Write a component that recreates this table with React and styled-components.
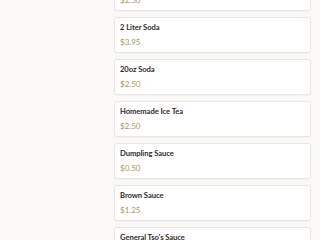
import React from "react";
import styled, { createGlobalStyle } from "styled-components";

const GlobalStyle = createGlobalStyle`
  body {
    margin: 0;
    background: #faf9f7;
    font-family: "Lato", "Noto Sans", sans-serif;
  }
`;

const items = [
  { name: "Hot Tea", price: "$2.50" },
  { name: "2 Liter Soda", price: "$3.95" },
  { name: "20oz Soda", price: "$2.50" },
  { name: "Homemade Ice Tea", price: "$2.50" },
  { name: "Dumpling Sauce", price: "$0.50" },
  { name: "Brown Sauce", price: "$1.25" },
  { name: "General Tso's Sauce", price: "$1.25" },
];

const Page = styled.div`
  height: 240px;
  overflow: hidden;
`;

const List = styled.div`
  display: flex;
  flex-direction: column;
  gap: 6px;
  margin: -25px 9px 0 114px;
`;

const Card = styled.div`
  background: #fff;
  border: 1px solid #e9e6e2;
  border-radius: 3px;
  box-shadow: 0 1px 1px rgba(0, 0, 0, 0.03);
  padding: 4px 6px 5px 5px;
  height: 36px;
  box-sizing: border-box;
`;

const Name = styled.div`
  font-size: 7.6px;
  font-weight: 700;
  letter-spacing: -0.05px;
  line-height: 10px;
  color: #2f2b28;
  margin-bottom: 5px;
`;

const Price = styled.div`
  font-size: 8px;
  line-height: 10px;
  color: #a8975e;
`;

export default function App() {
  return (
    <Page>
      <GlobalStyle />
      <List>
        {items.map(item => (
          <Card key={item.name}>
            <Name>{item.name}</Name>
            <Price>{item.price}</Price>
          </Card>
        ))}
      </List>
    </Page>
  );
}
